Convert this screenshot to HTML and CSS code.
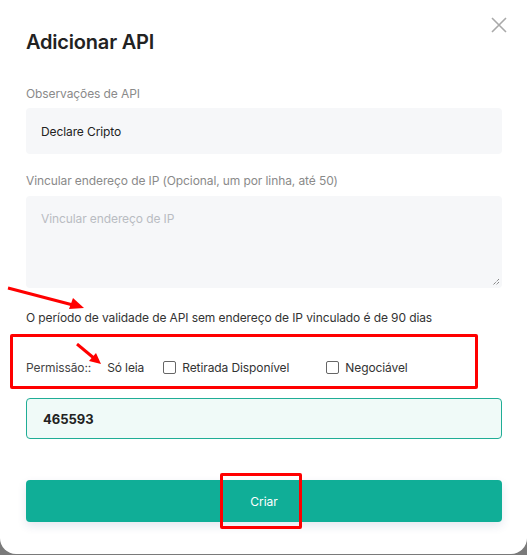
FILE: index.html
```html
<!DOCTYPE html>
<html lang="pt">
<head>
<meta charset="utf-8">
<title>Adicionar API</title>
<link rel="stylesheet" href="styles.css">
</head>
<body>
<div class="modal">
  <button class="close" aria-label="Fechar">
    <svg width="16" height="16" viewBox="0 0 16 16"><path d="M1 1 L15 15 M15 1 L1 15" stroke="#a9a9a9" stroke-width="1.6" fill="none"/></svg>
  </button>
  <h1 class="title">Adicionar API</h1>

  <label class="label first">Observações de API</label>
  <div class="field">Declare Cripto</div>

  <label class="label second">Vincular endereço de IP (Opcional, um por linha, até 50)</label>
  <div class="area">
    <span class="placeholder">Vincular endereço de IP</span>
    <svg class="grip" width="8" height="8" viewBox="0 0 8 8"><path d="M7 1 L1 7 M7 4 L4 7" stroke="#555" stroke-width="1" stroke-dasharray="1 1" fill="none"/></svg>
  </div>

  <p class="note">O período de validade de API sem endereço de IP vinculado é de 90 dias</p>

  <div class="perm">
    <span class="perm-label">Permissão::</span>
    <span class="readonly">Só leia</span>
    <span class="check"><span class="box"></span>Retirada Disponível</span>
    <span class="check two"><span class="box"></span>Negociável</span>
  </div>

  <div class="code">465593</div>

  <button class="create">Criar</button>

  <div class="mark mark-perm"></div>
  <div class="mark mark-btn"></div>
  <svg class="arrow a1" width="80" height="24" viewBox="0 0 80 24"><path d="M1 2 L66 19" stroke="#f00" stroke-width="3" fill="none"/><path d="M77 22 L62 23 L66 12 Z" fill="#f00"/></svg>
  <svg class="arrow a2" width="30" height="26" viewBox="0 0 30 26"><path d="M1 1 L19 16" stroke="#f00" stroke-width="3" fill="none"/><path d="M25 21 L13 18 L20 10 Z" fill="#f00"/></svg>
</div>
</body>
</html>
```

FILE: styles.css
```css
* { box-sizing: border-box; }
html, body { margin: 0; padding: 0; }
body {
  background: #7a7a7a;
  width: 527px;
  height: 555px;
  overflow: hidden;
  font-family: Inter, "Noto Sans", "Liberation Sans", sans-serif;
}
.modal {
  position: relative;
  background: #fff;
  width: 527px;
  height: 554px;
  border-radius: 0 0 16px 16px;
  padding: 30px 25px 0 26px;
  display: flex;
  flex-direction: column;
}
.close {
  position: absolute;
  top: 17px;
  left: 491px;
  border: 0;
  background: none;
  padding: 0;
  width: 16px;
  height: 16px;
}
.close svg { display: block; }
.title {
  margin: 0;
  font-size: 20px;
  line-height: 24px;
  font-weight: 600;
  color: #222;
  letter-spacing: -0.2px;
}
.label {
  font-size: 12px;
  line-height: 18px;
  color: #8a8a8a;
  letter-spacing: -0.1px;
}
.label.first { margin-top: 31px; }
.label.second { margin-top: 18px; }
.field {
  margin-top: 5px;
  height: 46px;
  background: #f6f7f9;
  border-radius: 4px;
  padding: 0 15px;
  display: flex;
  align-items: center;
  font-size: 12px;
  letter-spacing: -0.1px;
  color: #222;
}
.area {
  position: relative;
  margin-top: 6px;
  height: 92px;
  background: #f6f7f9;
  border-radius: 4px;
  padding: 14px 15px;
  font-size: 12px;
  letter-spacing: -0.1px;
  line-height: 18px;
}
.placeholder { color: #b9bcc2; }
.grip { position: absolute; right: 2px; bottom: 2px; }
.note {
  margin: 21px 0 0;
  font-size: 12px;
  letter-spacing: -0.1px;
  line-height: 18px;
  color: #333;
}
.perm {
  margin-top: 30px;
  height: 20px;
  display: flex;
  align-items: center;
  font-size: 12px;
  letter-spacing: -0.1px;
  color: #333;
}
.perm-label { color: #444; }
.readonly { margin-left: 16px; }
.check { display: flex; align-items: center; }
.check { margin-left: 19px; }
.check.two { margin-left: 37px; }
.box {
  width: 13px;
  height: 13px;
  border: 1px solid #666;
  border-radius: 2px;
  margin-right: 6px;
  background: #fff;
}
.code {
  margin-top: 21px;
  height: 41px;
  border: 1px solid #20ad96;
  background: #f0faf8;
  border-radius: 4px;
  padding: 0 16px;
  display: flex;
  align-items: center;
  font-size: 13px;
  font-weight: 700;
  color: #222;
}
.create {
  margin-top: 41px;
  height: 42px;
  border: 0;
  border-radius: 4px;
  background: #10ae97;
  color: #fff;
  font-family: inherit;
  font-size: 12px;
  box-shadow: 0 4px 10px rgba(40, 60, 120, 0.12);
}
.mark {
  position: absolute;
  border: 3px solid #ff0000;
  border-radius: 2px;
}
.mark-perm { left: 10px; top: 334px; width: 468px; height: 55px; }
.mark-btn { left: 220px; top: 473px; width: 82px; height: 56px; }
.arrow { position: absolute; }
.a1 { left: 7px; top: 286px; }
.a2 { left: 76px; top: 343px; }
```
